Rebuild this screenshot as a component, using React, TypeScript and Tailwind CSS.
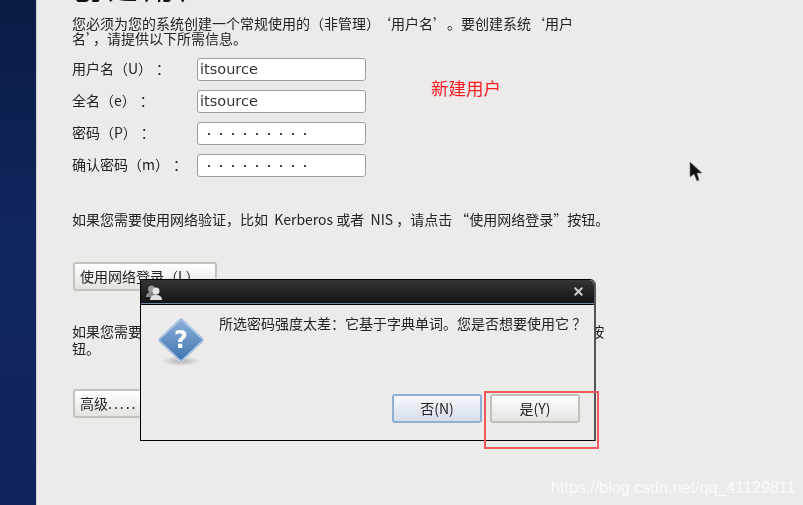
import { X } from 'lucide-react'

const fontCn = "font-['Noto_Sans_CJK_SC','DejaVu_Sans',sans-serif]"

const campos = [
  { label: '用户名（U）\u00a0\u200a：', valor: 'itsource', senha: false },
  { label: '全名（e）\u00a0\u200a：', valor: 'itsource', senha: false },
  { label: '密码（P）\u00a0\u200a：', valor: '•••••••••', senha: true },
  { label: '确认密码（m）\u00a0\u200a：', valor: '•••••••••', senha: true },
]

function BotaoFundo({ children, className }: { children: React.ReactNode; className: string }) {
  return (
    <div className={`h-[29px] flex items-center pl-[5px] rounded-[3px] border-2 border-[#c4c3c0] bg-gradient-to-b from-white to-[#e4e3e0] text-[14px] text-[#222] ${className}`}>
      {children}
    </div>
  )
}

function IconePergunta() {
  return (
    <svg width="48" height="50" viewBox="0 0 48 50" className="shrink-0">
      <defs>
        <linearGradient id="q" x1="0" y1="0" x2="0" y2="1">
          <stop offset="0" stopColor="#8cb0d8" />
          <stop offset="1" stopColor="#3f74b0" />
        </linearGradient>
        <radialGradient id="s">
          <stop offset="0" stopColor="#00000044" />
          <stop offset="1" stopColor="#00000000" />
        </radialGradient>
      </defs>
      <ellipse cx="24" cy="44" rx="19" ry="5" fill="url(#s)" />
      <path d="M24 2 Q25 2 26 3 L45 21 Q47 23 45 25 L26 43 Q24 45 22 43 L3 25 Q1 23 3 21 L22 3 Q23 2 24 2Z" fill="url(#q)" stroke="#dfe9f4" strokeWidth="2" />
      <path d="M24 2 Q25 2 26 3 L45 21 Q47 23 45 25 L26 43 Q24 45 22 43 L3 25 Q1 23 3 21 L22 3 Q23 2 24 2Z" fill="none" stroke="#5a8ac0" strokeWidth="0.7" />
      <text x="24" y="31" textAnchor="middle" fontSize="24" fontWeight="700" fill="#fff" fontFamily="'DejaVu Sans',sans-serif">?</text>
    </svg>
  )
}

export default function App() {
  return (
    <div className={`relative w-[803px] h-[505px] overflow-hidden flex bg-[#ecebe9] blur-[0.35px] ${fontCn}`}>
      <div className="w-[36px] shrink-0 bg-gradient-to-b from-[#0a1b45] via-[#10275f] to-[#0f2359]" />
      <div className="w-px shrink-0 bg-[#c9ced8]" />

      <main className="flex-1 pl-[35px] text-[#222]">
        <h1 className="mt-[-29px] h-[31px] text-[30px] leading-[31px] text-[#111] tracking-[6px]">创建用户</h1>
        <p className="mt-[14px] text-[14px] leading-[15px] text-[#222] whitespace-nowrap">
          您必须为您的系统创建一个常规使用的（非管理）<span className="ml-[4px]">‘用户名’</span><span className="ml-[7px]">。要创建系统‘用户</span>
          <br />
          名’，请提供以下所需信息。
        </p>

        <div className="mt-[12px] flex flex-col gap-[9px]">
          {campos.map((c) => (
            <div key={c.label} className="flex items-center h-[23px]">
              <span className="w-[125px] pb-[2px] text-[14px] whitespace-nowrap">{c.label}</span>
              <div className="w-[169px] h-[23px] flex items-center rounded-[3px] border border-[#9d9c98] bg-white pl-[2px] text-[15px] text-[#333]">
                {c.senha ? (
                  <span className="pl-[4px] text-[10px] tracking-[2px] text-[#222]">{c.valor}</span>
                ) : (
                  <span className="font-['DejaVu_Sans',sans-serif] text-[14.5px]">{c.valor}</span>
                )}
              </div>
            </div>
          ))}
        </div>

        <p className="mt-[32px] text-[14px] leading-[20px] whitespace-nowrap">
          如果您需要使用网络验证，比如 &nbsp;Kerberos 或者 &nbsp;NIS ，请点击 “使用网络登录”按钮。
        </p>

        <BotaoFundo className="mt-[33px] w-[144px] ml-[1px]">使用网络登录（L）</BotaoFundo>

        <p className="mt-[32px] text-[14px] leading-[17px] whitespace-nowrap">
          如果您需要在创建用户时有更多控制 [指定主目录和（/或）UID] ，请点击 ‘高级’ <span className="ml-[5px]">按</span>
          <br />
          钮。
        </p>

        <BotaoFundo className="mt-[32px] w-[100px] ml-[1px]">
          高级<span className="tracking-[2px]">.....</span>
        </BotaoFundo>
      </main>

      {/* dialogo por cima da pagina */}
      <div className="absolute left-[140px] top-[279px] w-[456px] h-[162px] flex flex-col border border-black border-r-[2px] border-r-[#555] rounded-tr-[6px] rounded-tl-[2px] bg-[#ecebe9]">
        <div className="h-[24px] shrink-0 flex items-center justify-between pl-[5px] pr-[9px] rounded-tr-[5px] bg-gradient-to-b from-[#353535] to-[#141414] border-b border-[#6f88a8]">
          <svg width="16" height="16" viewBox="0 0 16 16">
            <circle cx="5.5" cy="5" r="3.5" fill="#9a9a9a" />
            <path d="M0 13c0-3 2-5 5.5-5s5.5 2 5.5 5z" fill="#8a8a8a" />
            <circle cx="10" cy="7" r="3.5" fill="#e6e6e6" />
            <path d="M4 16c0-3 2-5 6-5s6 2 6 5z" fill="#e0e0e0" />
          </svg>
          <X size={13} strokeWidth={3.5} className="text-[#cfcfcf]" />
        </div>
        <div className="flex-1 flex flex-col border-t border-black">
          <div className="flex pl-[16px] pt-[12px]">
            <IconePergunta />
            <p className="ml-[14px] -mt-[4px] text-[14px] leading-[20px] text-[#222] whitespace-nowrap">
              所选密码强度太差：它基于字典单词。您是否想要使用它 ？
            </p>
          </div>
          <div className="mt-auto mb-[17px] flex justify-end gap-[8px] pr-[14px]">
            <button className="w-[90px] h-[29px] rounded-[3px] border-2 border-[#8fb0d6] bg-gradient-to-b from-[#f6f8fb] to-[#d5deea] text-[14px] text-[#222]">否(N)</button>
            <button className="w-[90px] h-[29px] rounded-[3px] border-2 border-[#c0bfbc] bg-gradient-to-b from-white to-[#e4e3e0] text-[14px] text-[#222]">是(Y)</button>
          </div>
        </div>
      </div>

      {/* anotacoes da captura */}
      <span className="absolute left-[431px] top-[77px] text-[17.5px] leading-[22px] text-[#fb1a24]">新建用户</span>
      <div className="absolute left-[484px] top-[391px] w-[115px] h-[58px] border-2 border-[#f4585e]" />
      <svg width="16" height="22" viewBox="0 0 16 22" className="absolute left-[688px] top-[161px]">
        <path d="M2 1 L2 16 L6 13 L9 20 L11 19 L9 12 L14 12 Z" fill="#111" stroke="#777" strokeWidth="0.6" />
      </svg>
      <span className="absolute left-[551px] top-[477px] text-[16.1px] leading-[20px] text-white/75 font-['Liberation_Sans',sans-serif] whitespace-nowrap">https://blog.csdn.net/qq_41129811</span>
    </div>
  )
}
